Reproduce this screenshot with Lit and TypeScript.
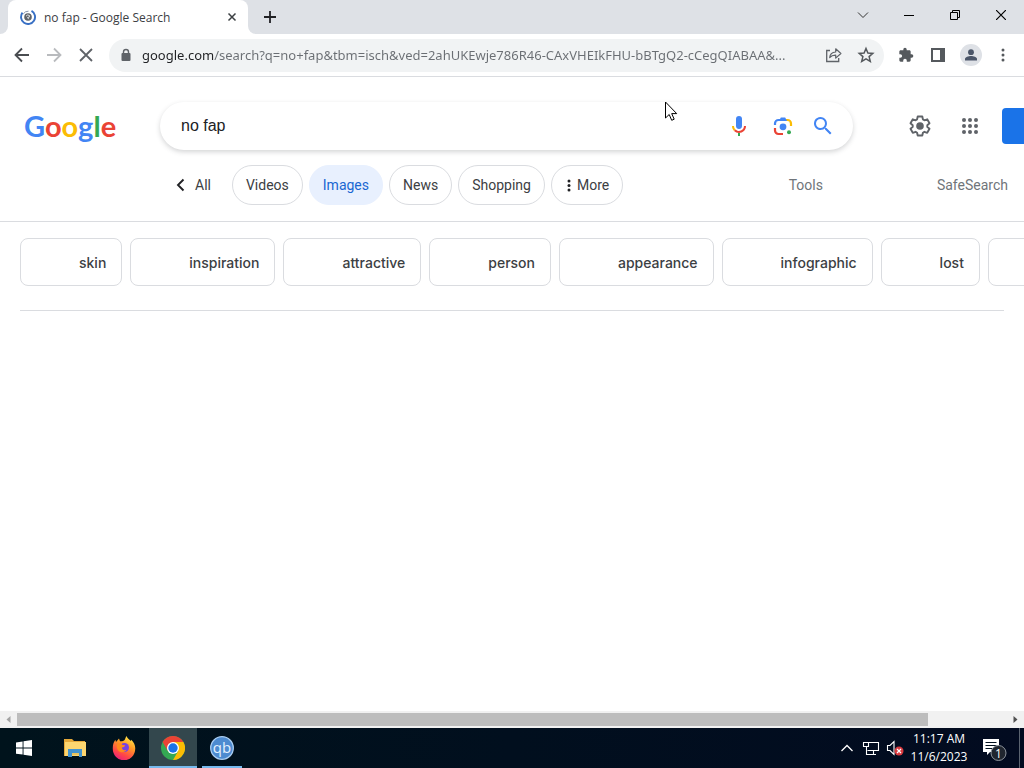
import { LitElement, html, css, svg } from "lit";
import { customElement } from "lit/decorators.js";
import { classMap } from "lit/directives/class-map.js";

const filters = ["Videos", "Images", "News", "Shopping"];
const topics = ["skin", "inspiration", "attractive", "person", "appearance", "infographic", "lost", "\u00a0"];
const logo = [
  ["G", "blue"], ["o", "red"], ["o", "yellow"], ["g", "blue"], ["l", "green"], ["e", "red"],
];
const icon = (size: number, body: unknown, box = `0 0 ${size} ${size}`) =>
  html`<svg width=${size} height=${size} viewBox=${box} aria-hidden="true">${body}</svg>`;

const base = css`
  * { box-sizing: border-box; }
  button {
    border: 0; padding: 0; margin: 0; background: none; color: inherit; font: inherit;
    display: flex; align-items: center; justify-content: center; flex: none;
  }
  a { color: inherit; text-decoration: none; }
  input { border: 0; padding: 0; margin: 0; outline: 0; background: none; min-width: 0; }
  svg { display: block; flex: none; }
`;

@customElement("browser-chrome")
export class BrowserChrome extends LitElement {
  static styles = [base, css`
    :host { display: block; font-family: "Open Sans", "Noto Sans", sans-serif; color: #3c4043; }
    .strip { display: flex; height: 34px; background: #dee1e6; }
    .lead { width: 8px; background: #fff; flex: none; }
    .lead::before { content: ""; display: block; height: 100%; background: #dee1e6; border-bottom-right-radius: 8px; }
    .tab {
      display: flex; align-items: center; width: 240px; padding: 0 10px 0 12px;
      background: #fff; border-radius: 8px 8px 0 0; font-size: 12px;
    }
    .title { flex: 1; margin-left: 8px; white-space: nowrap; }
    .tail { flex: 1; display: flex; background: #fff; }
    .rest { flex: 1; display: flex; background: #dee1e6; border-bottom-left-radius: 8px; padding-left: 12px; }
    .new { width: 20px; }
    .spacer { flex: 1; }
    .win { width: 46px; height: 29px; color: #000; }
    .bar {
      display: flex; align-items: center; height: 43px; padding: 0 12px;
      background: #fff; border-bottom: 1px solid #dadce0; color: #5f6368;
    }
    .nav { width: 20px; margin-right: 12px; }
    .omni {
      flex: 1; display: flex; align-items: center; height: 33px; margin: 0 12px 0 1px;
      padding: 0 9px 0 10px; border-radius: 17px; background: #f1f3f4;
    }
    .url {
      flex: 1; height: 24px; margin-left: 9px; font-family: "Noto Sans", sans-serif; font-size: 13px; color: transparent;
      background: linear-gradient(90deg, #202124 72px, #6a6e73 72px); background-clip: text; -webkit-background-clip: text;
    }
    .omni button { margin-left: 14px; }
    .ext { margin-right: 12px; width: 20px; }
    .avatar { width: 22px; height: 22px; border-radius: 50%; background: #dee1e6; margin-right: 12px; }
  `];
  render() {
    return html`
      <div class="strip">
        <div class="lead"></div>
        <div class="tab">
          ${icon(16, svg`<g fill="none"><circle cx="8" cy="8" r="3.8" fill="#5f6368"/><path d="M6 7.200q1.500-2.200 3.600-.6l-.4 1.600-1.700.3 1.200 1.700" stroke="#dfe2e6"/><path d="M11.500 1.900A7 7 0 1 1 2.500 3.700" stroke="#3970c4" stroke-width="1.900"/><path d="M3.200 5A5.800 5.800 0 0 1 8.500 2.200" stroke="#8b98b0"/></g>`)}
          <span class="title">no fap - Google Search</span>
          <button aria-label="Close tab">${icon(12, svg`<path d="M2.500 2.500l7 7M9.500 2.500l-7 7" stroke="#3c4043" stroke-width="1.500"/>`)}</button>
        </div>
        <div class="tail"><div class="rest">
          <button class="new" aria-label="New tab">${icon(16, svg`<path d="M8 2v12M2 8h12" stroke="#202124" stroke-width="1.800"/>`)}</button>
          <span class="spacer"></span>
          <button class="win" aria-label="Search tabs">${icon(12, svg`<path d="M1 3.500l5 5 5-5" fill="none" stroke="#333"/>`)}</button>
          <button class="win" aria-label="Minimize">${icon(10, svg`<path d="M0 5.500h10" stroke="#000"/>`)}</button>
          <button class="win" aria-label="Restore">${icon(10, svg`<path d="M.5 2.500h7v7h-7zM2.500 2.500v-2h7v7h-2" fill="none" stroke="#000"/>`)}</button>
          <button class="win" aria-label="Close">${icon(10, svg`<path d="M0 0l10 10M10 0L0 10" stroke="#000" stroke-width="1.200"/>`)}</button>
        </div></div>
      </div>
      <div class="bar">
        <button class="nav" aria-label="Back">${icon(16, svg`<path d="M15 8H2M8 1.500L1.500 8 8 14.500" fill="none" stroke="#4a4d51" stroke-width="1.800"/>`)}</button>
        <button class="nav" aria-label="Forward">${icon(16, svg`<path d="M1 8h13M8 1.500L14.500 8 8 14.500" fill="none" stroke="#b9bbbe" stroke-width="1.800"/>`)}</button>
        <button class="nav" aria-label="Stop">${icon(16, svg`<path d="M2 2l12 12M14 2L2 14" stroke="#5f6368" stroke-width="1.800"/>`)}</button>
        <div class="omni">
          ${icon(14, svg`<rect x="2.500" y="5" width="9" height="8" rx="1" fill="#5f6368"/><path d="M4.500 6V4a2.500 2.500 0 0 1 5 0v2" fill="none" stroke="#5f6368" stroke-width="1.400"/>`)}
          <input class="url" aria-label="Address" .value=${"google.com/search?q=no+fap&tbm=isch&ved=2ahUKEwje786R46-CAxVHEIkFHU-bBTgQ2-cCegQIABAA&..."}>
          <button aria-label="Share">${icon(18, svg`<path d="M5 4.500H1.700v11h12V12" fill="none" stroke="#5f6368" stroke-width="1.300"/><path d="M4.700 11.500C5 7.800 7.300 6.200 10.700 6V2.800l5.200 4.700-5.200 4.600V9.200C8 9.100 6.300 9.700 4.700 11.500z" fill="none" stroke="#5f6368" stroke-width="1.200" stroke-linejoin="round"/>`)}</button>
          <button aria-label="Bookmark">${icon(18, svg`<path d="M9 2.500l1.900 4.500 4.900.4-3.700 3.200 1.200 4.800L9 12.800l-4.300 2.600 1.200-4.800-3.700-3.200 4.900-.4z" fill="none" stroke="#55595d" stroke-width="1.500"/>`)}</button>
        </div>
        <button class="ext" aria-label="Extensions">${icon(16, svg`<path d="M20.500 11H19V7c0-1.100-.9-2-2-2h-4V3.500a2.500 2.500 0 0 0-5 0V5H4c-1.100 0-2 .9-2 2v3.800h1.500a2.700 2.700 0 0 1 0 5.400H2V20c0 1.100.9 2 2 2h3.800v-1.500a2.700 2.700 0 0 1 5.400 0V22H17c1.100 0 2-.9 2-2v-4h1.500a2.500 2.500 0 0 0 0-5z" fill="#55595d"/>`, "0 0 24 24")}</button>
        <button class="ext" aria-label="Side panel">${icon(14, svg`<path d="M0 0h14v14H0zM2 2v10h7V2z" fill="#55595d" fill-rule="evenodd"/>`)}</button>
        <button class="avatar" aria-label="Profile">${icon(14, svg`<circle cx="7" cy="4.200" r="2.900" fill="#4a5568"/><path d="M1 12.500V11c0-2 3.500-3 6-3s6 1 6 3v1.500z" fill="#4a5568"/>`)}</button>
        <button aria-label="Menu">${icon(18, svg`<g fill="#55595d"><circle cx="9" cy="4" r="1.500"/><circle cx="9" cy="9" r="1.500"/><circle cx="9" cy="14" r="1.500"/></g>`)}</button>
      </div>`;
  }
}

@customElement("results-page")
export class ResultsPage extends LitElement {
  static styles = [base, css`
    :host { display: block; overflow: hidden; background: #fff; font-family: Roboto, sans-serif; font-size: 14px; color: #3c4043; }
    .head { display: flex; align-items: center; height: 48px; margin-top: 25px; padding-left: 24px; }
    .logo { width: 136px; flex: none; font: 700 29px/40px Lato, sans-serif; }
    .blue { color: #4285f4; } .red { color: #ea4335; } .yellow { color: #fbbc05; } .green { color: #34a853; }
    .search {
      flex: 1; display: flex; align-items: center; height: 48px; padding: 0 18px 0 21px; border-radius: 24px;
      background: #fff; box-shadow: 0 2px 5px rgba(60, 64, 67, .22);
    }
    .q { flex: 1; font: 16px "Liberation Sans", sans-serif; color: #202124; }
    .search button { margin-left: 20px; }
    .search button:last-child { margin-left: 16px; }
    .tool { width: 24px; margin-left: 26px; }
    .tool.first { margin-left: 55px; }
    .signin { width: 96px; height: 36px; margin: 0 -74px 0 20px; border-radius: 4px; background: #1a73e8; }
    .filters {
      display: flex; align-items: center; gap: 6px; height: 72px; padding: 0 16px 2px 174px;
      border-bottom: 1px solid #dadce0;
    }
    .pill { display: flex; align-items: center; gap: 4px; height: 40px; padding: 0 13px; border: 1px solid #dadce0; border-radius: 20px; }
    .pill.on { background: #e8f0fe; border-color: #e8f0fe; color: #1967d2; }
    .all { display: flex; align-items: center; gap: 7px; margin-right: 15px; }
    .tools { margin-left: auto; margin-right: 108px; color: #70757a; }
    .safe { color: #70757a; }
    .topics { display: flex; gap: 8px; padding: 16px 0 0 20px; }
    .topic {
      display: flex; flex: none; align-items: center; height: 48px; padding: 0 15px 0 58px;
      border: 1px solid #dadce0; border-radius: 8px; font: 500 14px Inter, sans-serif;
    }
    .rule { height: 1px; border: 0; margin: 24px 20px 0; background: #dadce0; }
  `];
  render() {
    return html`
      <div class="head">
        <a class="logo" href="#" aria-label="Google">${logo.map(([c, tone]) => html`<span class=${tone}>${c}</span>`)}</a>
        <div class="search">
          <input class="q" aria-label="Search" .value=${"no fap"}>
          <button aria-label="Search by voice">${icon(24, svg`<path d="M12 15c1.700 0 3-1.300 3-3V5a3 3 0 0 0-6 0v7c0 1.700 1.300 3 3 3z" fill="#4285f4"/><path d="M11 18.900h2V22h-2z" fill="#34a853"/><path d="M7 12H5c0 1.900.8 3.600 2 4.900l1.500-1.400A5 5 0 0 1 7 12z" fill="#fbbc04"/><path d="M12 17c-1.400 0-2.600-.6-3.500-1.500L7 16.900A7 7 0 0 0 12 19c3.900 0 7-3.100 7-7h-2a5 5 0 0 1-5 5z" fill="#ea4335"/>`)}</button>
          <button aria-label="Search by image">${icon(24, svg`<g fill="none" stroke-width="2.200"><path d="M4 11V9.500A3.500 3.500 0 0 1 7.500 6H12" stroke="#4285f4"/><path d="M12 6h4.500A3.500 3.500 0 0 1 20 9.500V12" stroke="#fbbc04"/><path d="M4 14v2.500A3.500 3.500 0 0 0 7.500 20H12" stroke="#ea4335"/></g><path d="M8 7l1.800-3.500h4.400L16 7z" fill="#4285f4"/><circle cx="12" cy="12.800" r="3.400" fill="#4285f4"/><circle cx="18" cy="18.300" r="2" fill="#34a853"/>`)}</button>
          <button aria-label="Search">${icon(24, svg`<path d="M15.500 14h-.8l-.3-.3A6.500 6.500 0 1 0 13.700 14.400l.3.3v.8l5 5 1.500-1.500zm-6 0a4.500 4.500 0 1 1 0-9 4.500 4.500 0 0 1 0 9z" fill="#4285f4"/>`)}</button>
        </div>
        <button class="tool first" aria-label="Settings">${icon(24, svg`<path d="M9.700 2.500h4.600l.6 2.900 1.500.9 2.800-1 2.300 4-2.200 1.900v1.700l2.200 1.900-2.300 4-2.800-1-1.500.9-.6 2.800H9.700l-.6-2.800-1.500-.9-2.800 1-2.300-4 2.200-1.900v-1.700L2.500 9.300l2.300-4 2.800 1 1.500-.9z" fill="none" stroke="#5f6368" stroke-width="1.900" stroke-linejoin="round"/><circle cx="12" cy="12" r="3.800" fill="#5f6368"/>`)}</button>
        <button class="tool" aria-label="Google apps">${icon(24, svg`<g fill="#5f6368">${[6, 12, 18].map((y) => [6, 12, 18].map((x) => svg`<circle cx=${x} cy=${y} r="2"/>`))}</g>`)}</button>
        <button class="signin" aria-label="Sign in"></button>
      </div>
      <nav class="filters">
        <a class="all" href="#">${icon(14, svg`<path d="M9.500 1.500L4 7l5.500 5.500" fill="none" stroke="#202124" stroke-width="1.900"/>`)}All</a>
        ${filters.map((f) => html`<a href="#" class=${classMap({ pill: true, on: f === "Images" })}>${f}</a>`)}
        <button class="pill"><svg width="8" height="14" viewBox="0 0 8 14" aria-hidden="true"><g fill="#202124"><circle cx="4" cy="3" r="1.500"/><circle cx="4" cy="7.500" r="1.500"/><circle cx="4" cy="12" r="1.500"/></g></svg><span>More</span></button>
        <a class="tools" href="#">Tools</a>
        <a class="safe" href="#">SafeSearch</a>
      </nav>
      <div class="topics">${topics.map((t) => html`<a class="topic" href="#">${t}</a>`)}</div>
      <hr class="rule">`;
  }
}

@customElement("task-bar")
export class TaskBar extends LitElement {
  static styles = [base, css`
    :host {
      display: flex; height: 40px; color: #fff;
      background: linear-gradient(90deg, #00131c, #020b20); font: 12px/18px "Open Sans", "Noto Sans", sans-serif;
    }
    .app { width: 48px; height: 40px; margin-right: 1px; }
    .start { margin-right: 3px; }
    .active { background: #33474d; box-shadow: inset 0 -2px #76b9ed; }
    .open { background: linear-gradient(#76b9ed, #76b9ed) center bottom / 40px 2px no-repeat; }
    .space { flex: 1; }
    .tray { width: 24px; }
    .clock { display: block; width: 64px; text-align: center; white-space: nowrap; }
    .note { width: 49px; padding-right: 2px; border-right: 1px solid #5b6470; margin-right: 4px; }
  `];
  render() {
    return html`
      <button class="app start" aria-label="Start">${icon(16, svg`<path d="M0 2.400L6.600 1.500v6.100H0zM7.500 1.300L16 0v7.600H7.500zM0 8.500h6.600v6.100L0 13.700zM7.500 8.500H16V16l-8.500-1.200z" fill="#fff"/>`)}</button>
      <button class="app" aria-label="File Explorer">${icon(22, svg`<path d="M0 2h8l2 2h11v15H0z" fill="#e5a93a"/><path d="M1 5h21v14H1z" fill="#fcd670"/><path d="M4 12h14v8h-3v-4H8v4H4z" fill="#4293cf"/><path d="M8 16h7v2H8z" fill="#e9c35f"/>`)}</button>
      <button class="app" aria-label="Firefox">${icon(24, svg`
        <defs><linearGradient id="fx" x1=".8" y1="0" x2=".3" y2="1"><stop offset="0" stop-color="#fff04a"/><stop offset=".4" stop-color="#ff9726"/><stop offset=".75" stop-color="#ff4548"/><stop offset="1" stop-color="#e9217b"/></linearGradient></defs>
        <path d="M14.500 0c1 2.700 3.100 3.600 4.400 5l.4-1.200c2.800 2.700 4.200 6.200 3.900 9.300A11.200 11.200 0 0 1 .8 13C.6 9 1.600 6 3.400 3.800L4 6l3-3.500L8 5.200c2 .1 3.800-.2 4.600-1.200.8-1.200 1-2.700 1.900-4z" fill="url(#fx)"/>
        <circle cx="12.500" cy="11.500" r="4.500" fill="#7542e5"/><path d="M5 8.500c2-1.700 4-1.200 5.500.4l2.700.4c-.4 1.600-2 2-3.300 2.300 0 2.200 2 3.200 4.600 2.200-1.600 3-6.300 3.400-8.500.4C4.700 12.400 4.600 10.300 5 8.500z" fill="#ff8a1c"/>`)}</button>
      <button class="app active" aria-label="Chrome">${icon(24, svg`<circle cx="12" cy="12" r="12" fill="#34a853"/><path d="M1.600 6A12 12 0 0 1 22.400 6H12L6.800 15z" fill="#ea4335"/><path d="M22.400 6A12 12 0 0 1 12 24l5.200-9L12 6z" fill="#fbbc04"/><circle cx="12" cy="12" r="6" fill="#fff"/><circle cx="12" cy="12" r="4.700" fill="#1a73e8"/>`)}</button>
      <button class="app open" aria-label="qBittorrent">${icon(24, svg`<circle cx="12" cy="12" r="11.300" fill="#4d8bd0" stroke="#a9cdf2" stroke-width="1.300"/><text x="12" y="16.500" text-anchor="middle" font-size="15" font-family="Open Sans, sans-serif" fill="#e3f1ff">qb</text>`)}</button>
      <span class="space"></span>
      <button class="tray" aria-label="Show hidden icons">${icon(14, svg`<path d="M1.500 10L7 4.500l5.500 5.500" fill="none" stroke="#fff" stroke-width="1.300"/>`)}</button>
      <button class="tray" aria-label="Network">${icon(18, svg`<path d="M6.500 3.500h10v8h-11M4.500 8v7.500H8M11.500 12v3M8 15.500h6M1.500 3.500h5v4h-5z" fill="none" stroke="#fff" stroke-width="1.100"/>`)}</button>
      <button class="tray" aria-label="Volume muted">${icon(18, svg`<path d="M1.500 6.500H4l4-4v13l-4-4H1.500z" fill="none" stroke="#fff" stroke-width="1.100"/><circle cx="13" cy="12" r="4.500" fill="#d93a3f"/><path d="M11 10l4 4M15 10l-4 4" stroke="#fff" stroke-width="1.200"/>`)}</button>
      <button class="clock"><span>11:17 AM</span><br><span>11/6/2023</span></button>
      <button class="note" aria-label="Notifications">${icon(26, svg`<path d="M2 4h16v13h-9l-3 3v-3H2z" fill="#fff"/><path d="M4.500 7.500h11M4.500 10.500h11M4.500 13.500h7" stroke="#02111f" stroke-width="1.100"/><circle cx="17.500" cy="18" r="7.500" fill="#20262f" stroke="#8d949c"/><text x="17.500" y="22.500" text-anchor="middle" font-size="12" font-family="Open Sans, sans-serif" fill="#fff">1</text>`)}</button>`;
  }
}

@customElement("app-root")
export class AppRoot extends LitElement {
  static styles = [base, css`
    :host { display: flex; flex-direction: column; height: 100vh; overflow: hidden; position: relative; }
    results-page { flex: 1; min-height: 0; }
    .scroll { display: flex; align-items: center; height: 17px; padding: 0 5px; background: #f1f1f1; flex: none; }
    .track { flex: 1; height: 13px; margin: 0 5px; }
    .thumb { width: 92%; height: 13px; background: #bdbdbd; }
    .cursor { position: absolute; left: 664px; top: 101px; pointer-events: none; }
  `];
  render() {
    return html`
      <browser-chrome></browser-chrome>
      <results-page></results-page>
      <div class="scroll">
        ${icon(7, svg`<path d="M5.500 0v7L1.500 3.500z" fill="#a3a3a3"/>`)}
        <div class="track"><div class="thumb"></div></div>
        ${icon(7, svg`<path d="M1.500 0v7l4-3.500z" fill="#505050"/>`)}
      </div>
      <task-bar></task-bar>
      <svg class="cursor" width="14" height="21" viewBox="0 0 14 21" aria-hidden="true"><path d="M1.500 1v16l3.700-3.500 2.500 5.800 2.500-1.100-2.500-5.600h5z" fill="#fff" stroke="#000"/></svg>`;
  }
}
